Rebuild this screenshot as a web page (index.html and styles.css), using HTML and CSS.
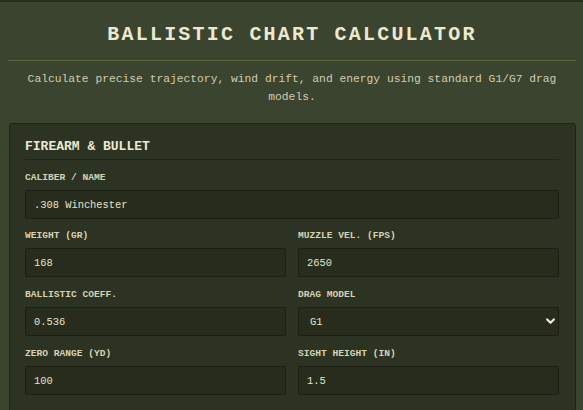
FILE: index.html
```html
<!DOCTYPE html>
<html lang="en">
<head>
<meta charset="utf-8">
<title>Ballistic Chart Calculator</title>
<link rel="stylesheet" href="styles.css">
</head>
<body>
<div class="page">
  <header class="hero">
    <h1 class="hero-title">BALLISTIC CHART CALCULATOR</h1>
    <p class="hero-sub">Calculate precise trajectory, wind drift, and energy using standard G1/G7 drag models.</p>
  </header>
  <section class="card">
    <h2 class="card-title">FIREARM &amp; BULLET</h2>
    <div class="field">
      <label class="label">CALIBER / NAME</label>
      <input class="input" type="text" value=".308 Winchester">
    </div>
    <div class="grid">
      <div class="field">
        <label class="label">WEIGHT (GR)</label>
        <input class="input" type="text" value="168">
      </div>
      <div class="field">
        <label class="label">MUZZLE VEL. (FPS)</label>
        <input class="input" type="text" value="2650">
      </div>
      <div class="field">
        <label class="label">BALLISTIC COEFF.</label>
        <input class="input" type="text" value="0.536">
      </div>
      <div class="field">
        <label class="label">DRAG MODEL</label>
        <div class="select-wrap">
          <select class="input select">
            <option>G1</option>
            <option>G7</option>
          </select>
          <svg class="chev" width="9" height="7" viewBox="0 0 9 7"><path d="M1.2 1.4 L4.5 4.8 L7.8 1.4" fill="none" stroke="#ece8d4" stroke-width="2.2" stroke-linecap="round" stroke-linejoin="round"/></svg>
        </div>
      </div>
      <div class="field">
        <label class="label">ZERO RANGE (YD)</label>
        <input class="input" type="text" value="100">
      </div>
      <div class="field">
        <label class="label">SIGHT HEIGHT (IN)</label>
        <input class="input" type="text" value="1.5">
      </div>
    </div>
  </section>
</div>
</body>
</html>
```
FILE: styles.css
```css
* { box-sizing: border-box; }
html, body { margin: 0; padding: 0; }
body {
  background: #3b442e;
  border-top: 2px solid #262b1d;
  font-family: "Liberation Mono", "Courier New", monospace;
  color: #e6e2c8;
  min-height: 410px;
}
.page {
  padding: 0 7px 0 8px;
}
.hero {
  text-align: center;
}
.hero-title {
  margin: 0;
  padding-top: 22px;
  padding-bottom: 14px;
  font-size: 20px;
  line-height: 22px;
  font-weight: bold;
  letter-spacing: 2.2px;
  color: #ece8d2;
  border-bottom: 1px solid #5b6645;
}
.hero-sub {
  margin: 0;
  padding: 9px 0 0;
  font-size: 11.3px;
  line-height: 18px;
  color: #d2cdb2;
}
.card {
  margin: 17px 0 0 1px;
  background: #2d3322;
  border: 1px solid #1f2418;
  border-radius: 3px;
  padding: 15px 16px 16px 15px;
}
.card-title {
  margin: 0 0 11px;
  font-size: 13px;
  line-height: 16px;
  font-weight: bold;
  color: #ece8d2;
  padding-bottom: 4px;
  border-bottom: 1px solid #1f2418;
}
.field {
  display: flex;
  flex-direction: column;
}
.grid {
  display: grid;
  grid-template-columns: 1fr 1fr;
  column-gap: 12px;
  row-gap: 11px;
  margin-top: 10px;
}
.label {
  font-size: 9.6px;
  line-height: 12px;
  font-weight: bold;
  color: #d6d2b4;
  margin-top: 1px;
  margin-bottom: 6px;
}
.input {
  height: 29px;
  width: 100%;
  background: #272c1c;
  border: 1px solid #1b1f14;
  border-radius: 2px;
  padding: 0 8px;
  font-family: "Liberation Mono", "Courier New", monospace;
  font-size: 10.4px;
  color: #e6e2c8;
  outline: none;
}
.select-wrap {
  position: relative;
}
.select {
  -webkit-appearance: none;
  appearance: none;
  padding-left: 11px;
}
.chev {
  position: absolute;
  right: 4px;
  top: 11px;
  pointer-events: none;
}
```
